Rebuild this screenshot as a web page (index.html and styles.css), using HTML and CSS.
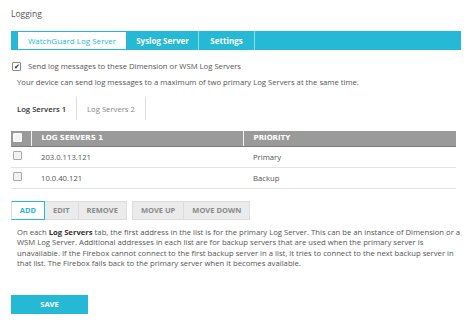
FILE: index.html
```html
<!DOCTYPE html>
<html>
<head>
  <meta charset="utf-8">
  <title>Logging</title>
  <link rel="stylesheet" href="styles.css">
</head>
<body>
  <div class="page">
    <div class="title">Logging</div>
    <div class="tabs">
      <div class="tab active">WatchGuard Log Server</div>
      <div class="tab">Syslog Server</div>
      <div class="tab">Settings</div>
    </div>
    <div class="check-row">
      <span class="box checked">&#10004;</span>
      <span>Send log messages to these Dimension or WSM Log Servers</span>
    </div>
    <div class="desc">Your device can send log messages to a maximum of two primary Log Servers at the same time.</div>
    <div class="subtabs">
      <div class="subtab active">Log Servers 1</div>
      <div class="subtab">Log Servers 2</div>
    </div>
    <table class="grid">
      <thead>
        <tr>
          <th class="col-check"><span class="box head"></span></th>
          <th class="col-addr">LOG SERVERS 1</th>
          <th class="col-prio">PRIORITY</th>
        </tr>
      </thead>
      <tbody>
        <tr>
          <td class="col-check"><span class="box"></span></td>
          <td class="col-addr">203.0.113.121</td>
          <td class="col-prio">Primary</td>
        </tr>
        <tr>
          <td class="col-check"><span class="box"></span></td>
          <td class="col-addr">10.0.40.121</td>
          <td class="col-prio">Backup</td>
        </tr>
      </tbody>
    </table>
    <div class="actions">
      <div class="group">
        <div class="btn primary">ADD</div>
        <div class="btn">EDIT</div>
        <div class="btn">REMOVE</div>
      </div>
      <div class="group">
        <div class="btn">MOVE UP</div>
        <div class="btn">MOVE DOWN</div>
      </div>
    </div>
    <p class="help">On each <b>Log Servers</b> tab, the first address in the list is for the primary Log Server. This can be an instance of Dimension or a<br>WSM Log Server. Additional addresses in each list are for backup servers that are used when the primary server is<br>unavailable. If the Firebox cannot connect to the first backup server in a list, it tries to connect to the next backup server in<br>that list. The Firebox fails back to the primary server when it becomes available.</p>
    <div class="save">SAVE</div>
  </div>
</body>
</html>
```

FILE: styles.css
```css
body, html {
    margin: 0;
    padding: 0;
    background: #fff;
}
body {
    font-family: "Open Sans", "Noto Sans", sans-serif;
    font-size: 7.7px;
    color: #555;
}
.page {
    padding: 8px 13px 0 11px;
}
.title {
    font-size: 8.5px;
    line-height: 12px;
    color: #555;
}
.tabs {
    display: flex;
    margin-top: 11px;
    height: 19px;
    background: #25b9d6;
    padding-left: 6px;
    box-sizing: border-box;
}
.tab {
    display: flex;
    align-items: center;
    justify-content: center;
    color: #fff;
    font-weight: bold;
    font-size: 8px;
    border-right: 1px solid #8fdcec;
    padding: 0;
}
.tab.active {
    background: #fff;
    color: #25b9d6;
    font-weight: normal;
    border: 1px solid #25b9d6;
    width: 110px;
    box-sizing: border-box;
}
.tab:nth-child(2) {
    width: 71px;
}
.tab:nth-child(3) {
    width: 55px;
}
.check-row {
    display: flex;
    align-items: center;
    gap: 7px;
    margin-top: 11px;
    line-height: 10px;
    padding-left: 1px;
}
.box {
    display: inline-block;
    width: 7px;
    height: 7px;
    border: 1px solid #aaa;
    border-radius: 1px;
    background: #f2f2f2;
    box-sizing: content-box;
}
.box.checked {
    background: #fff;
    border-color: #888;
    color: #222;
    font-size: 7px;
    line-height: 7px;
    text-align: center;
}
.box.head {
    background: #f5f5f5;
    border-color: #fff;
}
.desc {
    margin-top: 6px;
    padding-left: 6px;
    line-height: 10px;
}
.subtabs {
    display: flex;
    margin-top: 10px;
    padding-left: 6px;
    height: 23px;
}
.subtab {
    display: flex;
    align-items: center;
    padding: 0 10px;
    border-right: 1px solid #ddd;
    color: #888;
}
.subtab.active {
    padding-left: 0;
    color: #333;
    font-weight: 600;
}
.grid {
    width: 445px;
    margin-top: 11px;
    border-collapse: collapse;
}
.grid th {
    background: #9a9a9a;
    color: #fff;
    font-family: "DejaVu Sans", Verdana, sans-serif;
    font-size: 7px;
    font-weight: bold;
    text-align: left;
    height: 15px;
    padding: 0 10px;
    border-left: 1px solid #f5f5f5;
    border-bottom: 1px solid #7d7d7d;
    box-sizing: border-box;
}
.grid th:first-child {
    border-left: 0;
}
.grid td {
    height: 21px;
    padding: 0 10px;
    border-bottom: 1px solid #e3e3e3;
    color: #555;
    box-sizing: border-box;
}
.grid .col-check {
    width: 20px;
    padding: 0 0 0 2px;
}
.grid .col-addr {
    width: 212px;
}
.actions {
    display: flex;
    gap: 5px;
    margin-top: 12px;
}
.group {
    display: flex;
}
.btn {
    height: 19px;
    display: flex;
    align-items: center;
    justify-content: center;
    background: #ebebeb;
    border: 1px solid #dcdcdc;
    border-left: 0;
    color: #8a8a8a;
    font-weight: bold;
    font-size: 7.5px;
    padding: 0 8px;
    box-sizing: border-box;
}
.group .btn:first-child {
    border-left: 1px solid #dcdcdc;
}
.btn.primary {
    background: #fff;
    color: #25b9d6;
    border: 1px solid #25b9d6;
    width: 34px;
}
.help {
    margin: 7px 0 0 6px;
    line-height: 10.5px;
    white-space: nowrap;
    color: #555;
}
.help b {
    color: #333;
}
.save {
    margin-top: 26px;
    width: 77px;
    height: 19px;
    background: #25b9d6;
    color: #fff;
    font-weight: bold;
    font-size: 7.5px;
    display: flex;
    align-items: center;
    justify-content: center;
}
```
